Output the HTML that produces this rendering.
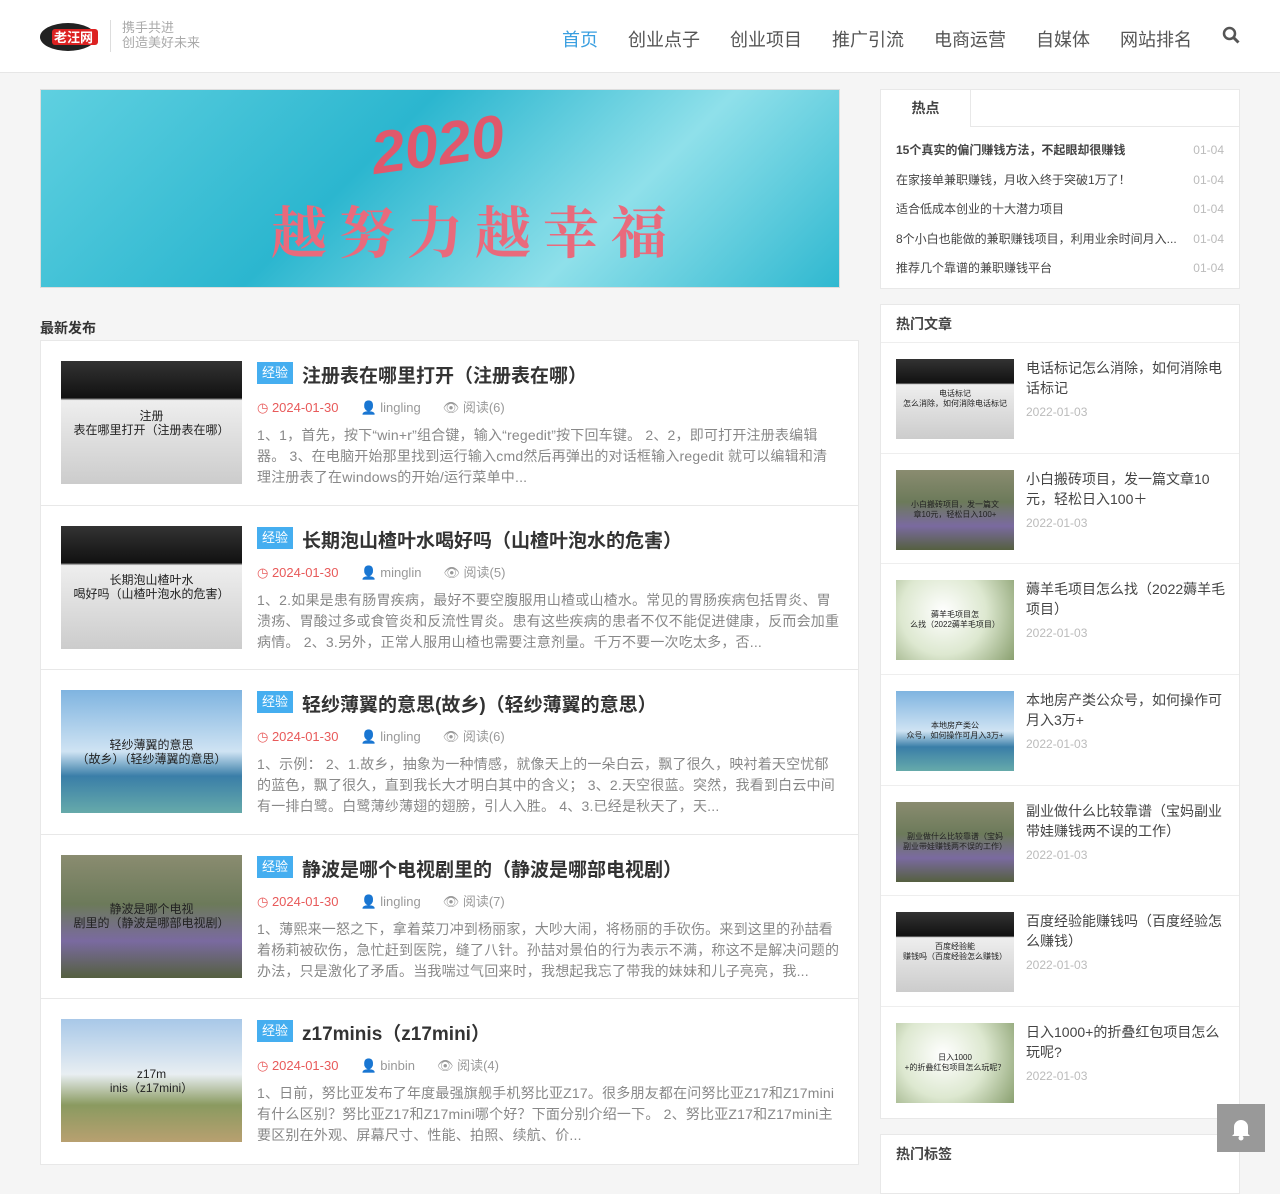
<!DOCTYPE html>
<html><head><meta charset="utf-8"><style>
*{margin:0;padding:0;box-sizing:border-box}
body{width:1280px;height:1167px;overflow:hidden;background:#f5f5f5;font-family:"Liberation Sans","Noto Sans CJK SC",sans-serif;color:#333;position:relative}
.hd{height:73px;background:#fff;border-bottom:1px solid #e6e6e6;position:relative}
.logo{position:absolute;left:40px;top:20px;width:60px;height:32px}
.slog{position:absolute;left:110px;top:20px;border-left:1px solid #ddd;padding-left:11px;font-size:13px;color:#aaa;line-height:15px;height:32px}
.nav{position:absolute;right:40px;top:26px;display:flex;gap:0;font-size:18px;color:#555}
.nav span{margin-left:30px}
.nav .on{color:#3a9fe0}
.banner{position:absolute;left:40px;top:89px;width:800px;height:199px;background:linear-gradient(135deg,#5fd0e0,#2bb6cf 40%,#8fe0ea 70%,#2fb8d0);overflow:hidden;border:1px solid #ddd}
.banner .t{position:absolute;left:230px;top:100px;font-size:56px;color:#e96a7c;font-family:"Noto Serif CJK SC",serif;letter-spacing:12px;font-weight:bold}
.banner .y{position:absolute;left:330px;top:20px;font-size:60px;color:#e0586c;font-style:italic;font-weight:bold;transform:rotate(-8deg)}
.sec{position:absolute;left:40px;top:318px;font-size:14px;font-weight:bold;color:#333}
.list{position:absolute;left:40px;top:340px;width:819px;background:#fff;border:1px solid #e8e8e8}
.it{height:164.5px;border-bottom:1px solid #e8e8e8;position:relative}
.th{position:absolute;left:20px;top:20px;width:181px;height:123px;display:flex;align-items:center;justify-content:center;text-align:center;font-size:12px;color:#222;line-height:14px}
.tag{position:absolute;left:216px;top:21px;background:#45aef0;color:#fff;font-size:13px;padding:2px 5px;line-height:18px}
.tt{position:absolute;left:261px;top:20px;font-size:19px;font-weight:bold;color:#333}
.meta{position:absolute;left:216px;top:56px;font-size:13px;color:#999}
.meta .d{color:#e85a5a;margin-right:22px}.meta span{margin-right:22px}
.ex{position:absolute;left:216px;top:84px;width:583px;font-size:14px;color:#888;line-height:21px;letter-spacing:0.2px}
.pia{background:linear-gradient(180deg,#333 0,#111 30%,#eee 32%,#ccc 100%)}
.sky{background:linear-gradient(180deg,#7fb4e0,#cfe3f3 50%,#3a7ea8 70%,#6aa 100%)}
.lav{background:linear-gradient(180deg,#8a8c70,#6c7a5a 40%,#7a6aa0 70%,#556040)}
.bea{background:linear-gradient(180deg,#a8c8e8,#e8eef2 45%,#8a9a60 70%,#b8a070)}
.flo{background:radial-gradient(circle at 40% 40%,#fff,#dde8d0 50%,#8aa070)}
.box{position:absolute;left:880px;width:360px;background:#fff;border:1px solid #e8e8e8}
.tab{height:37px;border-bottom:1px solid #e8e8e8;position:relative}
.tab span{position:absolute;left:0;top:0;width:90px;height:37px;border-right:1px solid #e8e8e8;background:#fff;text-align:center;line-height:37px;font-size:14px;font-weight:bold;color:#444}
.hot li{list-style:none;height:29.5px;line-height:29.5px;font-size:12px;color:#444;padding:0 15px;display:flex;justify-content:space-between}
.hot li b{color:#bbb;font-weight:normal}
.bt{height:38px;line-height:38px;padding-left:15px;font-size:14px;font-weight:bold;color:#444;border-bottom:1px solid #eee}
.ha{height:110.7px;border-bottom:1px solid #eee;position:relative}
.ha .th{left:15px;top:16px;width:118px;height:80px;font-size:8px;line-height:10px}
.ha .n{position:absolute;left:145px;top:15px;width:200px;font-size:14px;line-height:20px;color:#444}
.ha .dt{position:absolute;left:145px;top:62px;font-size:12px;color:#bbb}
.top{position:absolute;left:1217px;top:1104px;width:48px;height:48px;background:#999}
</style></head><body>
<div class="hd">
<svg class="logo" viewBox="0 0 60 32"><ellipse cx="28" cy="17" rx="28" ry="14" fill="#222"/><rect x="12" y="9" width="46" height="16" rx="3" fill="#d22"/><text x="14" y="22" font-size="13" fill="#fff" font-family="Noto Sans CJK SC" font-weight="bold">老汪网</text></svg>
<div class="slog">携手共进<br>创造美好未来</div>
<div class="nav"><span class="on">首页</span><span>创业点子</span><span>创业项目</span><span>推广引流</span><span>电商运营</span><span>自媒体</span><span>网站排名</span><span><svg width="18" height="18" viewBox="0 0 18 18" style="vertical-align:-2px"><circle cx="7.5" cy="7.5" r="5.5" stroke="#555" stroke-width="2.5" fill="none"/><path d="M11.5 11.5l5 5" stroke="#555" stroke-width="3"/></svg></span></div>
</div>
<div class="banner"><div class="y">2020</div><div class="t">越努力越幸福</div></div>
<div class="sec">最新发布</div>
<div class="list">
<div class="it"><div class="th pia">注册<br>表在哪里打开（注册表在哪）</div><div class="tag">经验</div><div class="tt">注册表在哪里打开（注册表在哪）</div><div class="meta"><span class="d">◷ 2024-01-30</span><span>👤 lingling</span><span>👁 阅读(6)</span></div><div class="ex">1、1，首先，按下“win+r”组合键，输入“regedit”按下回车键。 2、2，即可打开注册表编辑器。 3、在电脑开始那里找到运行输入cmd然后再弹出的对话框输入regedit 就可以编辑和清理注册表了在windows的开始/运行菜单中...</div></div>
<div class="it"><div class="th pia">长期泡山楂叶水<br>喝好吗（山楂叶泡水的危害）</div><div class="tag">经验</div><div class="tt">长期泡山楂叶水喝好吗（山楂叶泡水的危害）</div><div class="meta"><span class="d">◷ 2024-01-30</span><span>👤 minglin</span><span>👁 阅读(5)</span></div><div class="ex">1、2.如果是患有肠胃疾病，最好不要空腹服用山楂或山楂水。常见的胃肠疾病包括胃炎、胃溃疡、胃酸过多或食管炎和反流性胃炎。患有这些疾病的患者不仅不能促进健康，反而会加重病情。 2、3.另外，正常人服用山楂也需要注意剂量。千万不要一次吃太多，否...</div></div>
<div class="it"><div class="th sky">轻纱薄翼的意思<br>（故乡）（轻纱薄翼的意思）</div><div class="tag">经验</div><div class="tt">轻纱薄翼的意思(故乡)（轻纱薄翼的意思）</div><div class="meta"><span class="d">◷ 2024-01-30</span><span>👤 lingling</span><span>👁 阅读(6)</span></div><div class="ex">1、示例： 2、1.故乡，抽象为一种情感，就像天上的一朵白云，飘了很久，映衬着天空忧郁的蓝色，飘了很久，直到我长大才明白其中的含义； 3、2.天空很蓝。突然，我看到白云中间有一排白鹭。白鹭薄纱薄翅的翅膀，引人入胜。 4、3.已经是秋天了，天...</div></div>
<div class="it"><div class="th lav">静波是哪个电视<br>剧里的（静波是哪部电视剧）</div><div class="tag">经验</div><div class="tt">静波是哪个电视剧里的（静波是哪部电视剧）</div><div class="meta"><span class="d">◷ 2024-01-30</span><span>👤 lingling</span><span>👁 阅读(7)</span></div><div class="ex">1、薄熙来一怒之下，拿着菜刀冲到杨丽家，大吵大闹，将杨丽的手砍伤。来到这里的孙喆看着杨莉被砍伤，急忙赶到医院，缝了八针。孙喆对景伯的行为表示不满，称这不是解决问题的办法，只是激化了矛盾。当我喘过气回来时，我想起我忘了带我的妹妹和儿子亮亮，我...</div></div>
<div class="it" style="border:0"><div class="th bea">z17m<br>inis（z17mini）</div><div class="tag">经验</div><div class="tt">z17minis（z17mini）</div><div class="meta"><span class="d">◷ 2024-01-30</span><span>👤 binbin</span><span>👁 阅读(4)</span></div><div class="ex">1、日前，努比亚发布了年度最强旗舰手机努比亚Z17。很多朋友都在问努比亚Z17和Z17mini有什么区别？努比亚Z17和Z17mini哪个好？下面分别介绍一下。 2、努比亚Z17和Z17mini主要区别在外观、屏幕尺寸、性能、拍照、续航、价...</div></div>
</div>
<div class="box" style="top:89px;height:200px"><div class="tab"><span>热点</span></div><ul class="hot" style="padding-top:9px">
<li><span style="font-weight:bold">15个真实的偏门赚钱方法，不起眼却很赚钱</span><b>01-04</b></li>
<li><span>在家接单兼职赚钱，月收入终于突破1万了！</span><b>01-04</b></li>
<li><span>适合低成本创业的十大潜力项目</span><b>01-04</b></li>
<li><span>8个小白也能做的兼职赚钱项目，利用业余时间月入...</span><b>01-04</b></li>
<li><span>推荐几个靠谱的兼职赚钱平台</span><b>01-04</b></li></ul></div>
<div class="box" style="top:304px;height:815px"><div class="bt">热门文章</div>
<div class="ha"><div class="th pia">电话标记<br>怎么消除，如何消除电话标记</div><div class="n">电话标记怎么消除，如何消除电话标记</div><div class="dt">2022-01-03</div></div>
<div class="ha"><div class="th lav">小白搬砖项目，发一篇文<br>章10元，轻松日入100+</div><div class="n">小白搬砖项目，发一篇文章10元，轻松日入100＋</div><div class="dt">2022-01-03</div></div>
<div class="ha"><div class="th flo">薅羊毛项目怎<br>么找（2022薅羊毛项目）</div><div class="n">薅羊毛项目怎么找（2022薅羊毛项目）</div><div class="dt">2022-01-03</div></div>
<div class="ha"><div class="th sky">本地房产类公<br>众号，如何操作可月入3万+</div><div class="n">本地房产类公众号，如何操作可月入3万+</div><div class="dt">2022-01-03</div></div>
<div class="ha"><div class="th lav">副业做什么比较靠谱（宝妈<br>副业带娃赚钱两不误的工作）</div><div class="n">副业做什么比较靠谱（宝妈副业带娃赚钱两不误的工作）</div><div class="dt">2022-01-03</div></div>
<div class="ha"><div class="th pia">百度经验能<br>赚钱吗（百度经验怎么赚钱）</div><div class="n">百度经验能赚钱吗（百度经验怎么赚钱）</div><div class="dt">2022-01-03</div></div>
<div class="ha" style="border:0"><div class="th flo">日入1000<br>+的折叠红包项目怎么玩呢？</div><div class="n">日入1000+的折叠红包项目怎么玩呢?</div><div class="dt">2022-01-03</div></div>
</div>
<div class="box" style="top:1134px;height:60px"><div class="bt" style="border:0">热门标签</div></div>
<div class="top"><svg width="48" height="48" viewBox="0 0 48 48"><path d="M17 30v-7a7 7 0 0 1 14 0v7l2 2H15z" fill="#fff"/><circle cx="24" cy="34" r="2.5" fill="#fff"/></svg></div>
</body></html>
